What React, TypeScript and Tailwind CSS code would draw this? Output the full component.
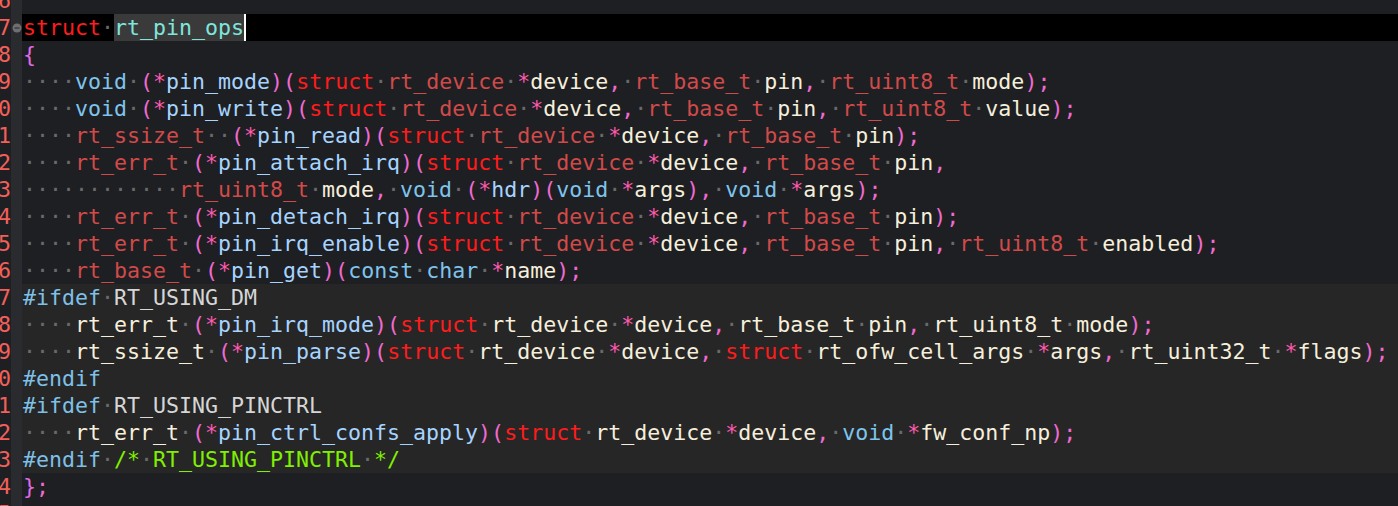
import React from "react";

type Tok = { t: string; c: string };

const C = {
  dot: "text-[#6a6a6a]",
  kw: "text-[#ff1c1c]",
  type: "text-[#d14a4a]",
  prim: "text-[#7ec4ec]",
  fn: "text-[#a6d4ff]",
  plain: "text-[#f6efdb]",
  punct: "text-[#f06ad0]",
  star: "text-[#ff5ab0]",
  pp: "text-[#7ec0e6]",
  macro: "text-[#d6d6d6]",
  comment: "text-[#80f000]",
  brace: "text-[#e06ae6]",
};

function tokenize(line: string, region: boolean, comment: boolean): Tok[] {
  const parts = line.match(/(·+|\/\*|\*\/|#\w+|\w+|[^\w·])/g) || [];
  const out: Tok[] = [];
  let inComment = false;
  parts.forEach((p, i) => {
    let c = C.plain;
    if (p.startsWith("·")) c = C.dot;
    else if (comment && p === "/*") {
      inComment = true;
      c = C.comment;
    } else if (inComment) c = C.comment;
    else if (p === "struct") c = C.kw;
    else if (p === "void" || p === "const" || p === "char") c = C.prim;
    else if (p.startsWith("#")) c = C.pp;
    else if (/^RT_USING/.test(p)) c = C.macro;
    else if (p === "{" || p === "}") c = C.brace;
    else if (p === "*") c = C.star;
    else if (/^[(),;]$/.test(p)) c = C.punct;
    else if (/^rt_/.test(p)) c = region ? C.plain : C.type;
    else if (/^\w+$/.test(p) && parts[i - 1] === "*" && parts[i - 2] === "(" && parts[i + 1] === ")")
      c = C.fn;
    out.push({ t: p, c });
  });
  return out;
}

const lines: { n: number; s: string; region?: boolean; comment?: boolean; special?: boolean }[] = [
  { n: 16, s: "" },
  { n: 17, s: "", special: true },
  { n: 18, s: "{" },
  { n: 19, s: "····void·(*pin_mode)(struct·rt_device·*device,·rt_base_t·pin,·rt_uint8_t·mode);" },
  { n: 20, s: "····void·(*pin_write)(struct·rt_device·*device,·rt_base_t·pin,·rt_uint8_t·value);" },
  { n: 21, s: "····rt_ssize_t··(*pin_read)(struct·rt_device·*device,·rt_base_t·pin);" },
  { n: 22, s: "····rt_err_t·(*pin_attach_irq)(struct·rt_device·*device,·rt_base_t·pin," },
  { n: 23, s: "············rt_uint8_t·mode,·void·(*hdr)(void·*args),·void·*args);" },
  { n: 24, s: "····rt_err_t·(*pin_detach_irq)(struct·rt_device·*device,·rt_base_t·pin);" },
  { n: 25, s: "····rt_err_t·(*pin_irq_enable)(struct·rt_device·*device,·rt_base_t·pin,·rt_uint8_t·enabled);" },
  { n: 26, s: "····rt_base_t·(*pin_get)(const·char·*name);" },
  { n: 27, s: "#ifdef·RT_USING_DM", region: true },
  { n: 28, s: "····rt_err_t·(*pin_irq_mode)(struct·rt_device·*device,·rt_base_t·pin,·rt_uint8_t·mode);", region: true },
  { n: 29, s: "····rt_ssize_t·(*pin_parse)(struct·rt_device·*device,·struct·rt_ofw_cell_args·*args,·rt_uint32_t·*flags);", region: true },
  { n: 30, s: "#endif", region: true },
  { n: 31, s: "#ifdef·RT_USING_PINCTRL", region: true },
  { n: 32, s: "····rt_err_t·(*pin_ctrl_confs_apply)(struct·rt_device·*device,·void·*fw_conf_np);", region: true },
  { n: 33, s: "#endif·/*·RT_USING_PINCTRL·*/", region: true, comment: true },
  { n: 34, s: "};" },
  { n: 35, s: "" },
];

function FoldMarker() {
  return (
    <svg width="10" height="10" viewBox="0 0 10 10" className="block">
      <circle cx="5" cy="5" r="4.5" fill="#6f6f72" />
      <rect x="2.5" y="4.3" width="5" height="1.4" fill="#3a3b3e" />
    </svg>
  );
}

export default function App() {
  return (
    <div
      className="w-[1398px] h-[506px] overflow-hidden bg-[#1e1f22] text-[21.6px] leading-[27px]"
      style={{ fontFamily: '"DejaVu Sans Mono", "Liberation Mono", monospace' }}
    >
      <div className="-mt-[13px] flex flex-col">
        {lines.map((ln) => {
          const bg = ln.special ? "bg-black" : ln.region ? "bg-[#262627]" : "bg-[#1e1f22]";
          return (
            <div key={ln.n} className="flex h-[27px] whitespace-pre">
              <div className="w-[11px] overflow-hidden flex justify-end text-[#f2605b]">
                <span className="shrink-0">{ln.n % 10}</span>
              </div>
              <div className="w-[11px] bg-[#2a2b2e] flex items-center justify-center">
                {ln.special ? <FoldMarker /> : null}
              </div>
              <div className={`flex-1 pl-[1px] ${bg}`}>
                {ln.special ? (
                  <span className="inline-flex h-[27px] items-stretch">
                    <span className={C.kw}>struct</span>
                    <span className={C.dot}>·</span>
                    <span className="bg-[#3a3a3b] text-[#7fe6dc]">rt_pin_ops</span>
                    <span className="w-[2px] bg-white" />
                  </span>
                ) : (
                  tokenize(ln.s, !!ln.region, !!ln.comment).map((tk, i) => (
                    <span key={i} className={tk.c}>
                      {tk.t}
                    </span>
                  ))
                )}
              </div>
            </div>
          );
        })}
      </div>
    </div>
  );
}
